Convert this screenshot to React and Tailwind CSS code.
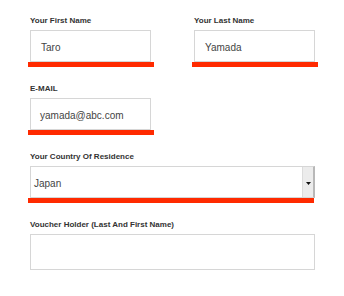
export default function App() {
  const label = "block h-[10px] text-[8px] leading-[10px] font-bold text-[#333] mb-[4px]";
  const box = "flex items-center pt-[3px] h-[32px] border border-[#d6d6d6] bg-white text-[10px] text-[#444]";
  const bar = "h-[5px] bg-[#ff2a00]";

  return (
    <div
      className="w-[344px] h-[296px] bg-white pl-[30px] pt-[16px]"
      style={{ fontFamily: '"Liberation Sans", Arial, sans-serif' }}
    >
      <div className="flex gap-[43px]">
        <div className="w-[121px]">
          <label className={label}>Your First Name</label>
          <div className={`${box} pl-[10px]`}>Taro</div>
          <div className={`${bar} -ml-[2px] w-[126px]`} />
        </div>
        <div className="w-[121px]">
          <label className={label}>Your Last Name</label>
          <div className={`${box} pl-[10px]`}>Yamada</div>
          <div className={`${bar} -ml-[2px] w-[126px]`} />
        </div>
      </div>

      <div className="mt-[17px] w-[121px]">
        <label className={label}>E-MAIL</label>
        <div className={`${box} pl-[9px]`}>yamada@abc.com</div>
        <div className={`${bar} -ml-[2px] w-[126px]`} />
      </div>

      <div className="mt-[17px] w-[285px]">
        <label className={label}>Your Country Of Residence</label>
        <div className="flex h-[32px] border border-[#d6d6d6] border-r-[#b8b8b8] border-r-2 bg-white text-[10px] text-[#444]">
          <div className="flex-1 flex items-center pl-[3px] pt-[3px]">Japan</div>
          <div className="w-[11px] bg-[#ececec] border-l border-[#dcdcdc] flex items-center justify-center pt-[3px]">
            <svg width="5" height="3" viewBox="0 0 5 3">
              <path d="M0 0H5L2.5 3Z" fill="#111" />
            </svg>
          </div>
        </div>
        <div className={`${bar} -ml-[2px] w-[286px]`} />
      </div>

      <div className="mt-[17px] w-[285px]">
        <label className={label}>Voucher Holder (Last And First Name)</label>
        <div className="h-[36px] border border-[#d6d6d6] bg-white" />
      </div>
    </div>
  );
}
